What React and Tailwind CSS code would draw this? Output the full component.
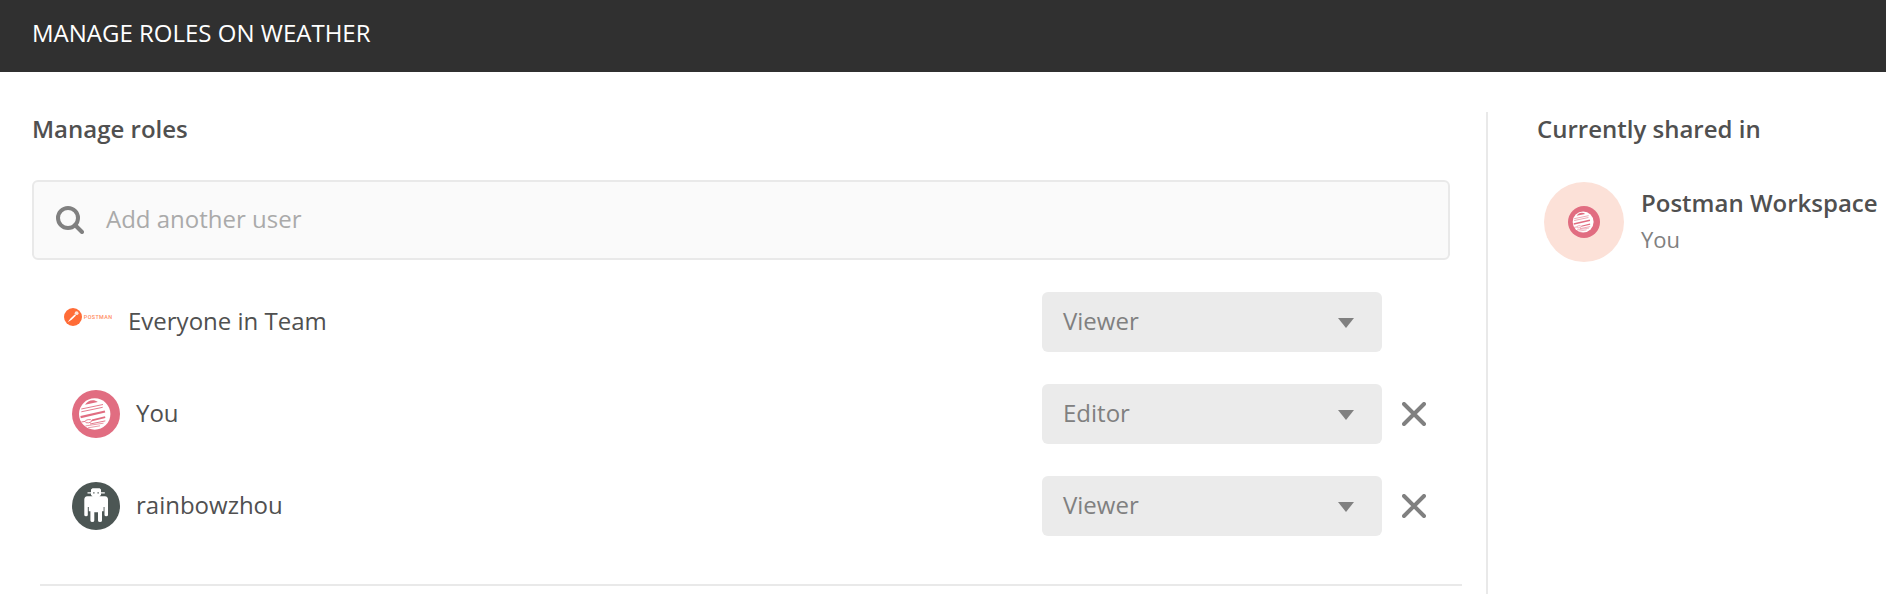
function SearchIcon() {
  return (
    <svg className="size-7 shrink-0" viewBox="0 0 28 28" fill="none" stroke="#808080" strokeWidth="4">
      <circle cx="12" cy="12" r="10" />
      <path d="M19 19 L26 26" strokeLinecap="round" />
    </svg>
  );
}

function CloseIcon() {
  return (
    <svg className="size-6" viewBox="0 0 24 24" stroke="#808080" strokeWidth="4" strokeLinecap="round">
      <path d="M2 2 L22 22 M22 2 L2 22" />
    </svg>
  );
}

function PlanetAvatar({ className }) {
  return (
    <svg className={className} viewBox="0 0 48 48" fill="none" stroke="#e16d81">
      <circle cx="24" cy="24" r="24" fill="#e16d81" stroke="none" />
      <circle cx="22.7" cy="24" r="15.7" fill="#fff" stroke="none" />
      <path d="M13 14.8 C15.5 10.6 21.5 8.6 25.8 12.1 Z" fill="#e16d81" stroke="none" />
      <path d="M9.3 19 L31 14.5 M9.3 21.8 L30.7 17.3" strokeWidth="0.9" />
      <path d="M8.6 27.1 L33 21.5" strokeWidth="2.2" />
      <path d="M20 30.3 L33.2 27.2" strokeWidth="1.7" />
      <ellipse cx="16.4" cy="31.2" rx="3.3" ry="1.6" transform="rotate(-8 16.4 31.2)" strokeWidth="0.8" />
      <path d="M9.3 32 L13 31.4 M18 34 L33.3 30.9" strokeWidth="0.9" />
      <path d="M13.5 35.9 L31.5 33.2 M16 37.8 L28 35.8" strokeWidth="0.7" />
    </svg>
  );
}

function RobotAvatar({ className }) {
  return (
    <svg className={className} viewBox="0 0 48 48">
      <circle cx="24" cy="24" r="24" fill="#4c5654" />
      <path
        d="M20.5 6.3 H27.7 L29 7.5 V10.2 H32.8 V11.5 H29 V13 L27.5 14.3 H33 Q36 14.6 36 17.5 V33 Q36 34.3 34.2 34.3 Q32.5 34.3 32.5 33 V25 H31.6 V29.3 H30 V38.5 Q30 40 28 40 Q26 40 26 38.5 V30.3 H22.3 V38.5 Q22.3 40 20.4 40 Q18.4 40 18.4 38.5 V29.3 H16.8 V25 H15.8 V33 Q15.8 34.3 14 34.3 Q12.3 34.3 12.3 33 V17.5 Q12.3 14.6 15.3 14.3 H20.5 L19 13 V11.5 H15.5 V10.2 H19 V7.5 Z"
        fill="#fff"
      />
      <path d="M21.2 10.2 h1.3 v1.2 h-1.3 z M25.5 10.2 h1.3 v1.2 h-1.3 z" fill="#4c5654" />
    </svg>
  );
}

function PostmanLogo() {
  return (
    <svg className="h-[18px] w-12" viewBox="0 0 48 18">
      <circle cx="9" cy="9" r="9" fill="#ff6c37" />
      <path d="M3.6 14.2 L6.5 10.5 L10.7 6.4 L12 7.6 L7.6 11.8 Z" fill="#fff" />
      <circle cx="12.6" cy="5.2" r="1.9" fill="#ffe3d8" />
      <text
        x="19.8"
        y="11"
        textLength="28.2"
        lengthAdjust="spacing"
        fontFamily="'Roboto', sans-serif"
        fontWeight="500"
        fontSize="5.4"
        fill="#ff8a61"
      >
        POSTMAN
      </text>
    </svg>
  );
}

function RoleSelect({ role }) {
  return (
    <div className="flex h-[60px] w-[340px] items-center justify-between rounded-md bg-[#ebebeb] pr-7 pl-[21px] text-[#808080]">
      <span className="pb-0.5">{role}</span>
      <svg className="mt-0.5 h-2.5 w-4" viewBox="0 0 16 10" fill="#808080">
        <path d="M0 0 H16 L8 10 Z" />
      </svg>
    </div>
  );
}

function MemberRow({ avatar, name, role, removable }) {
  return (
    <div className="flex h-[60px] items-center">
      {avatar}
      <span className="flex-1 pb-0.5 text-[#505050]">{name}</span>
      <RoleSelect role={role} />
      <div className="flex w-[68px] pl-5">{removable && <CloseIcon />}</div>
    </div>
  );
}

export default function App() {
  return (
    <div className="flex h-[594px] w-[1886px] flex-col overflow-hidden bg-white font-['Open_Sans',sans-serif] text-2xl leading-8 text-[#505050]">
      <header className="flex h-[72px] shrink-0 items-center bg-[#303030] px-8 pb-1.5 text-white">
        MANAGE ROLES ON WEATHER
      </header>
      <div className="flex flex-1 pt-10">
        <main className="w-[1486px] shrink-0 pl-8">
          <h2 className="pt-px font-semibold">Manage roles</h2>
          <div className="mt-[35px] flex h-20 w-[1418px] items-center gap-[22px] rounded-md border-2 border-[#e9e9e9] bg-[#fafafa] px-[22px] text-[#aaaaaa]">
            <SearchIcon />
            <span className="pb-0.5">Add another user</span>
          </div>
          <div className="mt-8 flex w-[1418px] flex-col gap-8">
            <MemberRow
              avatar={
                <div className="mr-4 ml-8 flex h-12 items-start pt-2.5">
                  <PostmanLogo />
                </div>
              }
              name="Everyone in Team"
              role="Viewer"
            />
            <MemberRow avatar={<PlanetAvatar className="mr-4 ml-10 size-12" />} name="You" role="Editor" removable />
            <MemberRow avatar={<RobotAvatar className="mr-4 ml-10 size-12" />} name="rainbowzhou" role="Viewer" removable />
          </div>
          <hr className="mt-12 ml-2 w-[1422px] border-t-2 border-[#e9e9e9]" />
        </main>
        <aside className="flex-1 border-l-2 border-[#e9e9e9] pl-12">
          <h2 className="pt-px pl-px font-semibold">Currently shared in</h2>
          <div className="mt-[37px] ml-2 flex gap-[17px]">
            <div className="flex size-20 shrink-0 items-center justify-center rounded-full bg-[#fce1d8]">
              <PlanetAvatar className="size-8" />
            </div>
            <div className="pt-[5px] whitespace-nowrap">
              <div className="font-semibold">Postman Workspace</div>
              <div className="mt-1 text-[22px] text-[#808080]">You</div>
            </div>
          </div>
        </aside>
      </div>
    </div>
  );
}
